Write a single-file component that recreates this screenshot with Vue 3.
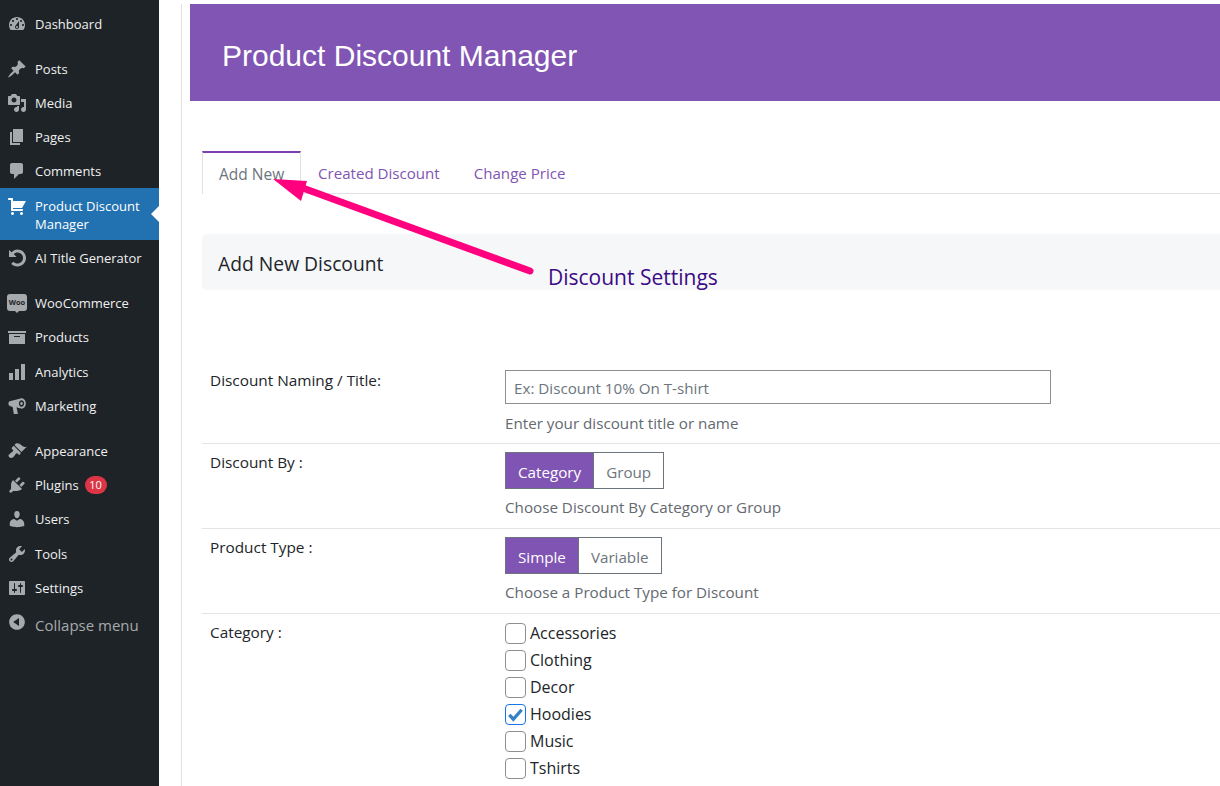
<script setup>
const menu = [
  { label: 'Dashboard', gap: true, vb: 'M3.76 16h12.48c1.1-1.37 1.76-3.11 1.76-5 0-4.42-3.58-8-8-8s-8 3.58-8 8c0 1.89.66 3.63 1.76 5zM10 4c.55 0 1 .45 1 1s-.45 1-1 1-1-.45-1-1 .45-1 1-1zM6 6c.55 0 1 .45 1 1s-.45 1-1 1-1-.45-1-1 .45-1 1-1zm8 0c.55 0 1 .45 1 1s-.45 1-1 1-1-.45-1-1 .45-1 1-1zm-5.37 5.55L12 7v6c0 1.1-.9 2-2 2s-2-.9-2-2c0-.57.24-1.08.63-1.45zM4 10c.55 0 1 .45 1 1s-.45 1-1 1-1-.45-1-1 .45-1 1-1zm12 0c.55 0 1 .45 1 1s-.45 1-1 1-1-.45-1-1 .45-1 1-1zm-5 3c0-.55-.45-1-1-1s-1 .45-1 1 .45 1 1 1 1-.45 1-1z' },
  { label: 'Posts', vb: 'M10.44 3.02l1.82-1.82 6.36 6.35-1.83 1.82c-1.05-.68-2.48-.57-3.41.36l-.75.75c-.92.93-1.04 2.35-.35 3.41l-1.83 1.82-2.41-2.41-2.8 2.79c-.42.42-3.38 2.71-3.8 2.29s1.86-3.39 2.28-3.81l2.79-2.79L4.1 9.36l1.83-1.82c1.05.69 2.48.57 3.4-.36l.75-.75c.93-.92 1.05-2.35.36-3.41z' },
  { label: 'Media', vb: 'M13 11V4c0-.55-.45-1-1-1h-1.67L9 1H5L3.67 3H2c-.55 0-1 .45-1 1v7c0 .55.45 1 1 1h10c.55 0 1-.45 1-1zM7 4.5c1.38 0 2.5 1.12 2.5 2.5S8.38 9.5 7 9.5 4.5 8.38 4.5 7 5.62 4.5 7 4.5zM14 6h5v10.5c0 1.38-1.12 2.5-2.5 2.5S14 17.88 14 16.5s1.12-2.5 2.5-2.5c.17 0 .34.02.5.05V9h-3V6zm-4 8.05V13h2v3.5c0 1.38-1.12 2.5-2.5 2.5S7 17.88 7 16.5 8.12 14 9.5 14c.17 0 .34.02.5.05z' },
  { label: 'Pages', vb: 'M6 15V2h10v13H6zm-1 1h8v2H3V5h2v11z' },
  { label: 'Comments', vb: 'M5 2h9c1.1 0 2 .9 2 2v7c0 1.1-.9 2-2 2h-2l-5 5v-5H5c-1.1 0-2-.9-2-2V4c0-1.1.9-2 2-2z' },
  { label: 'Product Discount Manager', active: true, vb: 'M6 13h9c.55 0 1 .45 1 1s-.45 1-1 1H5c-.55 0-1-.45-1-1V4H2c-.55 0-1-.45-1-1s.45-1 1-1h3c.55 0 1 .45 1 1v2h13l-4 7H6v1zm-.5 3c.83 0 1.5.67 1.5 1.5S6.33 19 5.5 19 4 18.33 4 17.5 4.67 16 5.5 16zm9 0c.83 0 1.5.67 1.5 1.5s-.67 1.5-1.5 1.5-1.5-.67-1.5-1.5.67-1.5 1.5-1.5z' },
  { label: 'AI Title Generator', gap: true, vb: 'M10.5 1.5c4.7 0 8.5 3.8 8.5 8.5s-3.8 8.5-8.5 8.5c-2.5 0-4.7-1-6.3-2.7l2.2-2.1c1 1.1 2.5 1.8 4.1 1.8 3 0 5.5-2.5 5.5-5.5s-2.5-5.5-5.5-5.5c-1.5 0-2.8.6-3.8 1.5L9.5 9H2V2l2.6 2.3C6 2.6 8.1 1.5 10.5 1.5z' },
  { label: 'WooCommerce', woo: true },
  { label: 'Products', vb: 'M19 4v2H1V4h18zM2 7h16v10H2V7zm11 3V9H7v1h6z' },
  { label: 'Analytics', vb: 'M18 18V2h-4v16h4zm-6 0V7H8v11h4zm-6 0v-7H2v7h4z' },
  { label: 'Marketing', gap: true, vb: 'M14.5 2.3c2.5 0 4.3 2.3 4.3 5.2s-1.8 5.2-4.3 5.2c-.6 0-5-1.4-5-1.4l1.3 5.9c.1.5-.2.9-.7.9H7.5c-.4 0-.7-.3-.8-.7l-1-6.5-2.9-.9C2 9.7 1.5 9 1.5 8.1v-1c0-.9.5-1.6 1.3-1.9L13.5 2.5c.3-.1.6-.2 1-.2zm0 2c-1.5 0-2.6 1.4-2.6 3.2s1.1 3.2 2.6 3.2 2.6-1.4 2.6-3.2-1.1-3.2-2.6-3.2zm0 1.7c.8 0 1.3.7 1.3 1.5s-.5 1.5-1.3 1.5-1.3-.7-1.3-1.5.5-1.5 1.3-1.5z' },
  { label: 'Appearance', vb: 'M14.48 11.06L7.41 3.99l1.5-1.5c.5-.56 2.3-.47 3.51.32 1.21.8 1.43 1.28 2.91 2.1 1.18.64 2.45 1.26 4.45.85zm-.71.71L6.7 4.7 4.93 6.47c-.39.39-.39 1.02 0 1.41l1.06 1.06c.39.39.39 1.03 0 1.42-.6.6-1.43 1.11-2.21 1.69-.35.26-.7.53-1.01.84C1.43 13.25 1 14.96 2.27 16.23s2.98.84 4.34-.52c.31-.31.58-.66.84-1.01.58-.78 1.09-1.61 1.69-2.21.39-.39 1.03-.39 1.42 0l1.06 1.06c.39.39 1.02.39 1.41 0z' },
  { label: 'Plugins', badge: '10', vb: 'M13.11 4.36L9.87 7.6 8 5.73l3.24-3.24c.35-.34 1.05-.2 1.56.32.52.51.66 1.21.31 1.55zm-8 1.77l.91-1.12 9.01 9.01-1.19.84c-.71.71-2.63 1.16-3.82 1.16H6.14L4.9 17.26c-.59.59-1.54.59-2.12 0-.59-.58-.59-1.53 0-2.12l1.24-1.24v-3.88c0-1.13.4-3.19 1.09-3.89zm7.26 3.97l3.24-3.24c.34-.35 1.04-.21 1.55.31.52.51.66 1.21.31 1.55l-3.24 3.25z' },
  { label: 'Users', vb: 'M10 9.25c-2.27 0-2.73-3.44-2.73-3.44C7 4.02 7.82 2 9.97 2c2.16 0 2.98 2.02 2.71 3.81 0 0-.41 3.44-2.68 3.44zm0 2.57L12.72 10c2.39 0 4.52 2.33 4.52 4.53v2.49s-3.65 1.13-7.24 1.13c-3.65 0-7.24-1.13-7.24-1.13v-2.49c0-2.25 1.94-4.48 4.47-4.48z' },
  { label: 'Tools', vb: 'M16.68 9.77c-1.34 1.34-3.3 1.67-4.95.99l-5.41 6.52c-.99.99-2.59.99-3.58 0s-.99-2.59 0-3.57l6.52-5.42c-.68-1.65-.35-3.61.99-4.95 1.28-1.28 3.12-1.62 4.72-1.06l-2.89 2.89 2.82 2.82 2.86-2.87c.53 1.58.18 3.39-1.08 4.67zM3.81 16.21c.4.39 1.04.39 1.43 0 .4-.4.4-1.04 0-1.43-.39-.4-1.03-.4-1.43 0-.39.39-.39 1.03 0 1.43z' },
  { label: 'Settings', vb: 'M18 16V4c0-.55-.45-1-1-1H3c-.55 0-1 .45-1 1v12c0 .55.45 1 1 1h14c.55 0 1-.45 1-1zM8 11h1c.55 0 1 .45 1 1s-.45 1-1 1H8v1.5c0 .28-.22.5-.5.5s-.5-.22-.5-.5V13H6c-.55 0-1-.45-1-1s.45-1 1-1h1V5.5c0-.28.22-.5.5-.5s.5.22.5.5V11zm5-2h-1c-.55 0-1-.45-1-1s.45-1 1-1h1V5.5c0-.28.22-.5.5-.5s.5.22.5.5V7h1c.55 0 1 .45 1 1s-.45 1-1 1h-1v5.5c0 .28-.22.5-.5.5s-.5-.22-.5-.5V9z' },
]
const cats = [
  { name: 'Accessories' }, { name: 'Clothing' }, { name: 'Decor' },
  { name: 'Hoodies', on: true }, { name: 'Music' }, { name: 'Tshirts' },
]
</script>

<template>
  <div class="page">
    <aside class="side">
      <a
        v-for="m in menu"
        :key="m.label"
        class="item"
        :class="{ active: m.active, gap: m.gap }"
      >
        <span v-if="m.woo" class="woo">Woo</span>
        <svg v-else class="ico" viewBox="0 0 20 20"><path :d="m.vb" fill-rule="evenodd" /></svg>
        <span class="lbl">{{ m.label }}</span>
        <span v-if="m.badge" class="badge">{{ m.badge }}</span>
      </a>
      <a class="item collapse">
        <svg class="ico" viewBox="0 0 20 20"><path d="M10 2.16c4.33 0 7.84 3.51 7.84 7.84s-3.51 7.84-7.84 7.84S2.16 14.33 2.16 10 5.67 2.16 10 2.16zm2 11.72V6.12L6.18 9.9z" /></svg>
        <span class="lbl">Collapse menu</span>
      </a>
    </aside>

    <div class="gutter"></div>

    <main class="main">
      <header class="banner"><h1>Product Discount Manager</h1></header>

      <div class="body">
        <nav class="tabs">
          <a class="tab on">Add New</a>
          <a class="tab">Created Discount</a>
          <a class="tab">Change Price</a>
        </nav>

        <h2 class="head">Add New Discount</h2>

        <div class="row first">
          <label>Discount Naming / Title:</label>
          <div>
            <input class="text" placeholder="Ex: Discount 10% On T-shirt" />
            <p class="hint">Enter your discount title or name</p>
          </div>
        </div>
        <div class="row">
          <label>Discount By :</label>
          <div>
            <div class="seg"><span class="on">Category</span><span>Group</span></div>
            <p class="hint">Choose Discount By Category or Group</p>
          </div>
        </div>
        <div class="row">
          <label>Product Type :</label>
          <div>
            <div class="seg"><span class="on">Simple</span><span>Variable</span></div>
            <p class="hint">Choose a Product Type for Discount</p>
          </div>
        </div>
        <div class="row last">
          <label>Category :</label>
          <div class="checks">
            <div v-for="c in cats" :key="c.name" class="chk">
              <span class="box" :class="{ on: c.on }">
                <svg v-if="c.on" viewBox="0 0 20 20"><path d="M3.5 10.5l4.2 4.5L16.5 5" /></svg>
              </span>
              {{ c.name }}
            </div>
          </div>
        </div>

        <svg class="arrow" viewBox="0 0 340 110" width="340" height="110">
          <path d="M328 97 L98 13" class="shaft" />
          <path d="M71 5 L105 7 L99 27 Z" class="tip" />
        </svg>
        <span class="note">Discount Settings</span>
      </div>
    </main>
  </div>
</template>

<style scoped>
.page {
  display: flex;
  width: 1220px;
  height: 786px;
  overflow: hidden;
  background: #fff;
  font-family: "Open Sans", "Noto Sans", sans-serif;
  color: #23282d;
}
.side {
  width: 159px;
  flex: none;
  background: #1e2327;
  padding-top: 7px;
  box-sizing: border-box;
}
.item {
  display: flex;
  align-items: center;
  min-height: 34.2px;
  color: #f0f0f1;
  font-size: 13px;
  line-height: 18px;
  position: relative;
}
.item:nth-child(-n+5) { min-height: 34px; }
.item.gap { margin-bottom: 11px; }
.item.active {
  background: #2271b1;
  color: #fff;
  min-height: 52px;
  align-items: flex-start;
  padding-top: 9px;
  box-sizing: border-box;
}
.item.active + .item { min-height: 35.2px; }
.item.active .ico { fill: #fff; margin-top: -1px; }
.item.active::after {
  content: "";
  position: absolute;
  right: 0;
  top: 18px;
  border: 8px solid transparent;
  border-right-color: #fff;
  border-left: 0;
}
.ico {
  width: 20px;
  height: 20px;
  margin-left: 7px;
  margin-right: 8px;
  flex: none;
  fill: #a7aaad;
}
.lbl { flex: 0 1 auto; width: auto; max-width: 115px; }
.woo {
  position: relative;
  width: 20px;
  height: 17px;
  margin: -2px 8px 0 7px;
  flex: none;
  background: #a7aaad;
  border-radius: 3px;
  color: #1e2327;
  font-size: 7.5px;
  line-height: 17px;
  text-align: center;
  font-weight: 700;
}
.woo::after {
  content: "";
  position: absolute;
  left: 8px;
  top: 17px;
  border: 2px solid transparent;
  border-top-color: #a7aaad;
}
.badge {
  margin-left: 6px;
  min-width: 22px;
  height: 18px;
  border-radius: 9px;
  background: #dc3545;
  color: #fff;
  font-size: 11px;
  line-height: 18px;
  text-align: center;
}
.item.collapse {
  color: #a7aaad;
  font-size: 15px;
  margin-top: 3px;
}
.item.collapse .ico { margin-top: -6px; }
.gutter {
  width: 22px;
  flex: none;
  border-right: 1px solid #e0e0e0;
  margin-top: 4px;
}
.main {
  flex: 1;
  min-width: 0;
  padding-left: 8px;
  padding-top: 4px;
}
.banner {
  height: 97px;
  box-sizing: border-box;
  background: #8155b3;
  display: flex;
  align-items: center;
  padding: 7px 0 0 32px;
}
.banner h1 {
  margin: 0;
  color: #fff;
  font: 400 30px "Liberation Sans", Arial, sans-serif;
}
.body {
  position: relative;
  padding: 50px 0 0 12px;
}
.tabs {
  display: flex;
  border-bottom: 1px solid #dee2e6;
  height: 42px;
}
.tab {
  padding: 0 17px;
  font-size: 15.1px;
  line-height: 44px;
  color: #7f54b3;
}
.tab.on {
  color: #6c757d;
  border: 1px solid #dee2e6;
  border-top: 2px solid #7f3fb0;
  border-bottom: 0;
  height: 43px;
  box-sizing: border-box;
  background: #fff;
  width: 99px;
  padding: 0 16px;
  line-height: 43px;
  font-size: 15.5px;
  white-space: nowrap;
}
.head {
  margin: 40px -6px 0 0;
  height: 56px;
  background: #f6f7f9;
  border-radius: 5px;
  padding-left: 16px;
  font-size: 19.3px;
  font-weight: 400;
  line-height: 60px;
  color: #212529;
}
.row {
  display: flex;
  padding: 8px 0 11px 8px;
  border-bottom: 1px solid #e2e4e7;
  font-size: 15.2px;
  color: #212529;
}
.row.first { margin-top: 72px; padding-bottom: 10px; }
.row.last { border-bottom: 0; }
.row label { width: 295px; flex: none; line-height: 20px; font-size: 15.35px; }
.text {
  display: block;
  width: 546px;
  height: 34px;
  box-sizing: border-box;
  border: 1px solid #8c8f94;
  padding: 1px 8px 0;
  font: inherit;
  color: #212529;
}
.text::placeholder { color: #6c757d; opacity: 1; }
.hint {
  margin: 8px 0 0;
  color: #646970;
  line-height: 20px;
}
.first .hint { margin-top: 9px; }
.seg {
  display: flex;
  width: fit-content;
  border: 1px solid #6c757d;
  height: 37px;
  box-sizing: border-box;
  font-size: 15.2px;
}
.seg span {
  padding: 0 12px;
  line-height: 38px;
  color: #6c757d;
}
.seg span.on { background: #7f54b3; color: #fff; }
.seg span + span { border-left: 1px solid #6c757d; }
.checks { display: flex; flex-direction: column; margin-top: -2.5px; }
.chk {
  display: flex;
  align-items: center;
  height: 27px;
  font-size: 16px;
  gap: 4px;
}
.box {
  width: 21px;
  height: 21px;
  box-sizing: border-box;
  border: 1px solid #8c8f94;
  border-radius: 4px;
}
.box.on { border-color: #1a73e8; }
.box svg { display: block; width: 19px; height: 19px; }
.box path { fill: none; stroke: #3582c4; stroke-width: 3.5; }
.arrow {
  position: absolute;
  left: 12px;
  top: 73px;
  pointer-events: none;
}
.shaft { stroke: #ff007f; stroke-width: 7; stroke-linecap: round; fill: none; }
.tip { fill: #ff007f; }
.note {
  position: absolute;
  left: 358px;
  top: 162px;
  font-size: 21px;
  line-height: 28px;
  color: #3b0a84;
}
</style>

<style>
html, body { margin: 0; background: #fff; }
</style>
